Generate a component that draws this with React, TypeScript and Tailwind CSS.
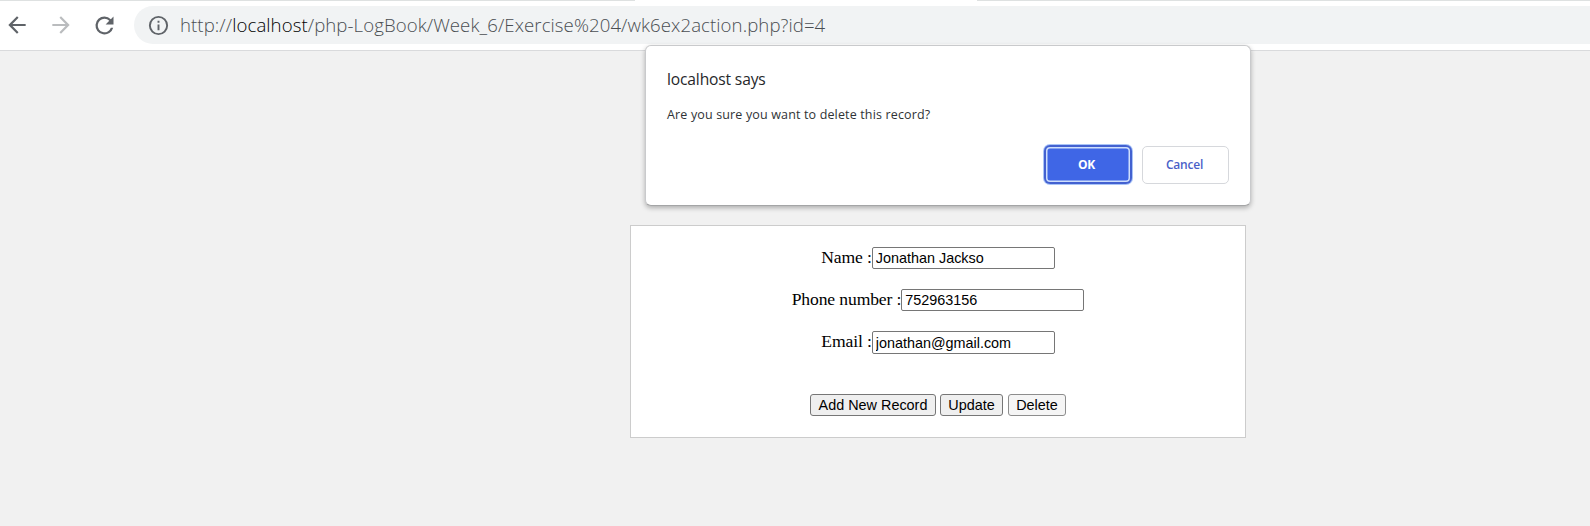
import React from "react";

type FieldProps = { label: string; value: string; inputClass: string };

function Field({ label, value, inputClass }: FieldProps) {
  return (
    <div className="flex items-start justify-center">
      <label className="-mt-px text-[17.6px] leading-[22px] tracking-[-0.13px] whitespace-pre text-black">{label}</label>
      <input
        className={`w-[183px] rounded-[2px] border border-[#767676] bg-white px-[3px] font-['Liberation_Sans',Arial,sans-serif] text-[14.4px] text-black outline-none ${inputClass}`}
        defaultValue={value}
      />
    </div>
  );
}

function Toolbar() {
  return (
    <header className="flex h-[51px] flex-col border-b border-[#d9dadc] bg-white">
      <div className="flex h-px justify-between">
        <div className="w-[635px] bg-[#dee1e1]" />
        <div className="w-[613px] bg-[#dee1e1]" />
      </div>
      <div className="flex pt-[5px]">
        <nav className="flex w-[134px] items-center pl-[4px]">
          <svg className="h-[26px] w-[26px]" viewBox="0 0 24 24" fill="#5f6368">
            <path d="M20 11H7.83l5.59-5.59L12 4l-8 8 8 8 1.41-1.41L7.83 13H20v-2z" />
          </svg>
          <svg className="ml-[18px] h-[26px] w-[26px]" viewBox="0 0 24 24" fill="#babcbe">
            <path d="M12 4l-1.41 1.41L16.17 11H4v2h12.17l-5.58 5.59L12 20l8-8z" />
          </svg>
          <svg className="ml-[16.5px] h-[27px] w-[27px]" viewBox="0 0 24 24" fill="#5f6368">
            <path d="M17.65 6.35A7.958 7.958 0 0 0 12 4a8 8 0 1 0 7.73 10h-2.08A6 6 0 1 1 12 6c1.66 0 3.14.69 4.22 1.78L13 11h7V4l-2.35 2.35z" />
          </svg>
        </nav>
        <div className="flex h-[38px] flex-1 items-center rounded-l-full bg-[#f1f3f4] pl-[13px]">
          <svg className="h-[23px] w-[23px]" viewBox="0 0 24 24" fill="#5f6368">
            <path d="M11 7h2v2h-2zm0 4h2v6h-2zm1-9a10 10 0 1 0 0 20 10 10 0 0 0 0-20zm0 18a8 8 0 1 1 0-16 8 8 0 0 1 0 16z" />
          </svg>
          <span className="ml-[10px] font-['Open_Sans','Noto_Sans',sans-serif] text-[18.6px] leading-[38px] font-light tracking-[0.085px] whitespace-nowrap text-[#4a4e52]">
            http://<span className="text-black">localhost</span>/php-LogBook/Week_6/Exercise%204/wk6ex2action.php?id=4
          </span>
        </div>
      </div>
    </header>
  );
}

function ConfirmDialog() {
  return (
    <div
      role="dialog"
      className="absolute top-[45px] left-[645px] flex h-[161px] w-[606px] flex-col rounded-[6px] border border-[#c9cacc] border-b-[#a4a5a6] bg-white px-[21px] font-['Open_Sans','Noto_Sans',sans-serif] shadow-[0_2px_5px_rgba(0,0,0,0.28)]"
    >
      <h1 className="mt-[22px] text-[15.6px] leading-[22px] tracking-[-0.15px] text-[#26272a]">localhost says</h1>
      <p className="mt-[16px] text-[12.5px] leading-[18px] tracking-[0.15px] text-[#303336]">
        Are you sure you want to delete this record?
      </p>
      <div className="mt-[21px] flex items-center justify-end gap-[10px] text-[12px] font-semibold tracking-[-0.2px]">
        <button className="h-[39px] w-[88px] rounded-[6px] bg-[#3f66e6] pr-[3px] font-bold text-white shadow-[inset_0_0_0_2px_#4361d0,inset_0_0_0_3.5px_#cfdffc,0_0_0_1px_#a9c4f7]">
          OK
        </button>
        <button className="h-[38px] w-[87px] rounded-[5px] border border-[#d6d8dc] bg-white pr-[2px] text-[#4a5fc8]">
          Cancel
        </button>
      </div>
    </div>
  );
}

export default function App() {
  return (
    <div className="relative h-[526px] w-[1590px] overflow-hidden bg-[#f1f1f1]">
      <Toolbar />
      <main className="mt-[174px] ml-[630px] h-[213px] w-[616px] border border-[#ccc] bg-white pt-[21px] font-['Liberation_Serif','Times_New_Roman',serif]">
        <Field label="Name :" value="Jonathan Jackso" inputClass="h-[22px]" />
        <div className="mt-5">
          <Field label="Phone number :" value="752963156" inputClass="h-[22px]" />
        </div>
        <div className="mt-5">
          <Field label="Email :" value="jonathan@gmail.com" inputClass="h-[23px]" />
        </div>
        <div className="mt-10 flex justify-center font-['Liberation_Sans',Arial,sans-serif] text-[14.4px] leading-5 text-black">
          <button className="h-[22px] w-[126px] rounded-[3px] border border-[#767676] bg-[#efefef]">Add New Record</button>
          <button className="ml-1 h-[22px] w-[63px] rounded-[3px] border border-[#767676] bg-[#efefef]">Update</button>
          <button className="ml-[5px] h-[22px] w-[58px] rounded-[3px] border border-[#8d8d8d] bg-[#f5f5f5]">Delete</button>
        </div>
      </main>
      <ConfirmDialog />
    </div>
  );
}
